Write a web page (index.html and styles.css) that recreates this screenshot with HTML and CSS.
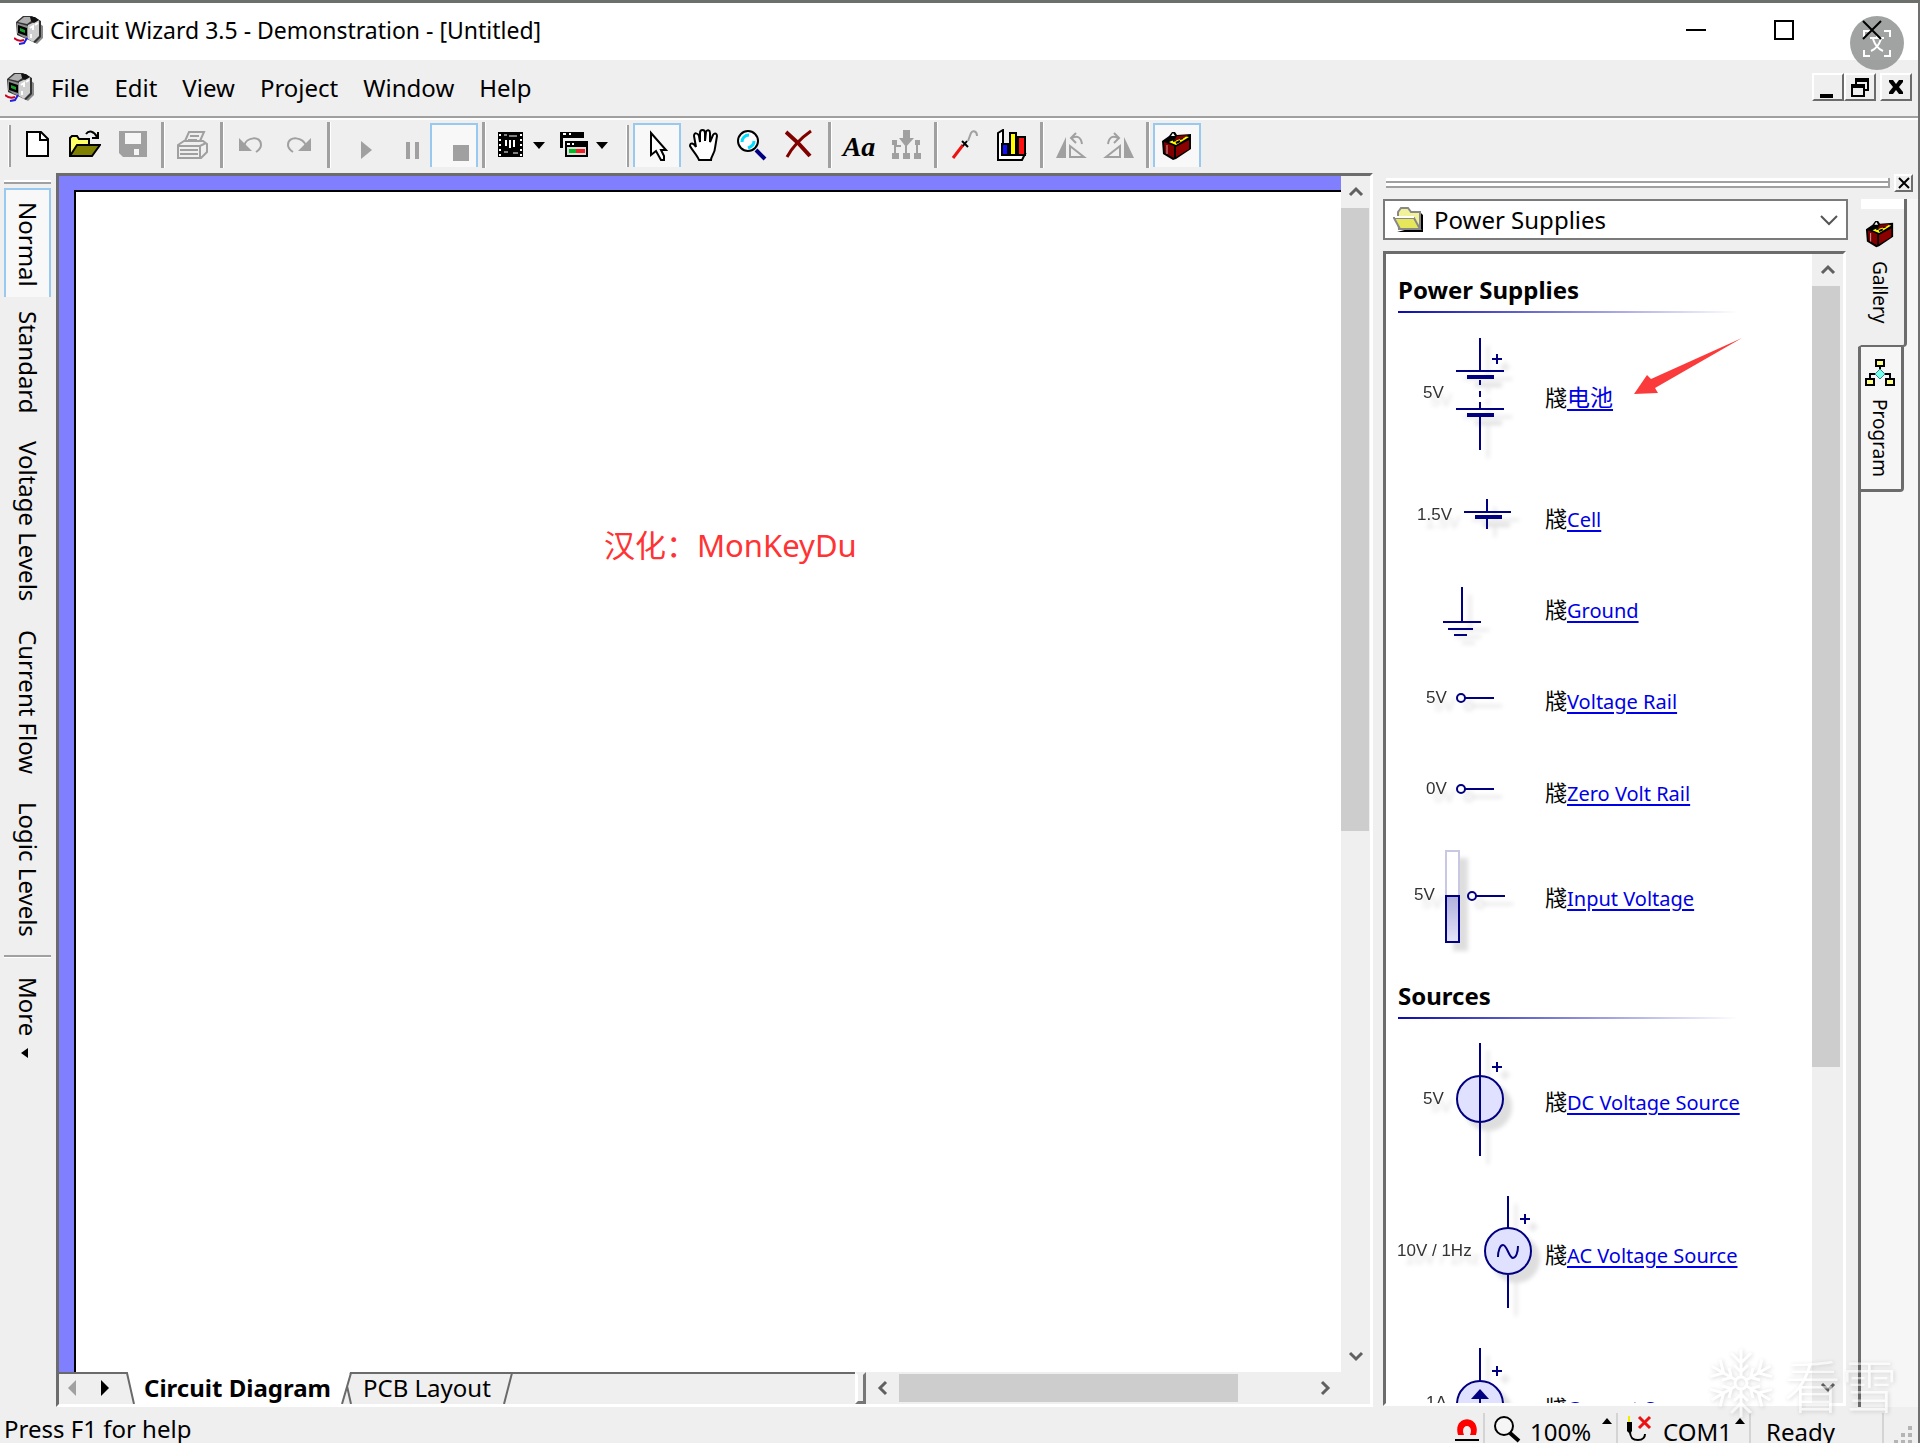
FILE: index.html
```html
<!DOCTYPE html>
<html lang="en">
<head>
<meta charset="utf-8">
<title>Circuit Wizard 3.5 - Demonstration - [Untitled]</title>
<link rel="stylesheet" href="styles.css">
</head>
<body>
<svg class="defs" aria-hidden="true">
  <symbol id="app" viewBox="0 0 30 30">
    <path d="M22 6l7 5v12l-6 6-7-4z" fill="#8a8a8a"/>
    <path d="M2 7L9 1h9l9 5v16l-6 6-6-3-5-2-7-3z" fill="#333"/>
    <path d="M4 7l6-5h7l3 2-7 5z" fill="#b0b0b0"/>
    <path d="M3 8l11 3v13l-5-2-6-4z" fill="#8c8c8c"/>
    <path d="M14 10l11-5v16l-6 6-5-3z" fill="#cfcfcf"/>
    <path d="M16 2h5l4 3-5 3-3-2z" fill="#111"/>
    <path d="M4 10l9 3v8l-9-3z" fill="#000"/>
    <path d="M6 13l5 2v3l-5-2z" fill="#15a02a"/>
    <path d="M16 13l3-2v4M21 10l3-2M17 19v4" stroke="#fff" stroke-width="2" fill="none"/>
    <path d="M0 23c3 3 7 3 10 2" stroke="#d00020" stroke-width="2" fill="none"/>
    <path d="M5 29l5-1 3-5" stroke="#2020e0" stroke-width="2" fill="none"/>
  </symbol>
  <symbol id="toolbox" viewBox="0 0 32 32">
    <path d="M1 11L8 6l3-4h3l2 3 14-1v15l-15 10-3 1-10-6z" fill="#000"/>
    <path d="M3 12l10 4v12L4 23z" fill="#800000"/>
    <path d="M15 17l13-7v9l-13 8z" fill="#8c0000"/>
    <path d="M8 12l15-6 5 1-13 8z" fill="#ff0"/>
    <path d="M12 11l3-1M19 9l3-1M15 13l4-2" stroke="#000" stroke-width="2"/>
    <path d="M16 6l11-1-4 3-10 3z" fill="#800000"/>
    <path d="M10 6l2-3 2 3z" fill="#fff"/>
    <path d="M6 15v9" stroke="#d8a0a0" stroke-width="1"/>
  </symbol>
  <symbol id="plus" viewBox="-6 -6 12 12"><path d="M-5 0H5M0-5V5" stroke="#000080" stroke-width="2"/></symbol>
  <symbol id="x" viewBox="0 0 16 16"><path d="M1 1h4l3 4 3-4h4v2l-4 5 4 5v2h-4l-3-4-3 4H1v-2l4-5-4-5z" fill="#000"/></symbol>
</svg>

<div class="window">
  <header class="titlebar">
    <svg class="app-icon" width="30" height="30"><use href="#app"/></svg>
    <h1>Circuit Wizard 3.5 - Demonstration - [Untitled]</h1>
    <div class="caption">
      <button aria-label="Minimize"><svg width="20" height="20"><path d="M0 10h20" stroke="#000" stroke-width="2"/></svg></button>
      <button aria-label="Maximize"><svg width="20" height="20"><path d="M1 1h18v18H1z" fill="none" stroke="#000" stroke-width="2"/></svg></button>
      <button aria-label="Close"><svg width="20" height="20"><path d="M1 1l18 18M19 1L1 19" stroke="#000" stroke-width="2"/></svg></button>
    </div>
    <button class="translate" aria-label="Translate">
      <svg width="54" height="54" viewBox="0 0 54 54" fill="none" stroke="#fff" stroke-width="2">
        <path d="M14 21v-6h6M34 15h6v6M40 34v6h-6M20 40h-6v-6"/>
        <path d="M20 22h14M27 19v3M23 23c2 6 5 10 10 12M31 23c-2 6-5 10-10 12"/>
      </svg>
    </button>
  </header>

  <nav class="menubar">
    <svg class="app-icon" width="30" height="30"><use href="#app"/></svg>
    <button>File</button><button>Edit</button><button>View</button><button>Project</button><button>Window</button><button>Help</button>
    <div class="mdi">
      <button aria-label="Minimize document"><svg width="28" height="24"><path d="M6 19h13v4H6z"/></svg></button>
      <button aria-label="Restore document"><svg width="28" height="24"><path d="M9 3h14v13h-4v6H5V9h4zM11 7v2h8v5h2V7zM7 13v7h10v-7z" fill-rule="evenodd"/></svg></button>
      <button class="apart" aria-label="Close document"><svg width="28" height="24"><use href="#x" x="6" y="4" width="16" height="16"/></svg></button>
    </div>
  </nav>

  <div class="toolbar" role="toolbar" aria-label="Tools">
    <div class="tools">
      <span class="grip"></span>
      <button aria-label="New"><svg width="32" height="32"><path d="M6 3h14l7 7v17H6z" fill="#fff" stroke="#000" stroke-width="2"/><path d="M19 3v8h8" fill="none" stroke="#000" stroke-width="2"/></svg></button>
      <button aria-label="Open"><svg width="32" height="32"><path d="M1 27V9l2-2h5l2 3h10v6" fill="#ff6" stroke="#000" stroke-width="2"/><path d="M1 27L8 16h23l-8 11z" fill="#808000" stroke="#000" stroke-width="2"/><path d="M17 5c3-4 8-3 11 3M29 3v6h-6" fill="none" stroke="#000" stroke-width="2"/></svg></button>
      <button aria-label="Save" disabled><svg width="32" height="32"><path d="M2 2h28v26H6l-4-4z" fill="#a0a0a0"/><path d="M8 4h16v11H8zM17 20h5v6h-5z" fill="#f6f6f6"/></svg></button>
      <span class="sep"></span>
      <button aria-label="Print" disabled><svg width="32" height="32" fill="none" stroke="#a0a0a0" stroke-width="2"><path d="M9 12L13 3h15l-4 9M14 7h9M12 11h9"/><path d="M2 16l6-4h19l4 3v8l-6 6H2z"/><path d="M2 17h22l6-3M24 17v11M4 21h18M4 25h18"/></svg></button>
      <span class="sep"></span>
      <button aria-label="Undo" disabled><svg width="32" height="32"><path d="M4 9v13h13z" fill="#a0a0a0"/><path d="M9 17c2-9 17-11 17-1 0 3-2 5-5 7" fill="none" stroke="#a0a0a0" stroke-width="2"/></svg></button>
      <button aria-label="Redo" disabled><svg width="32" height="32"><path d="M28 9v13H15z" fill="#a0a0a0"/><path d="M23 17C21 8 5 6 5 16c0 3 2 5 5 7" fill="none" stroke="#a0a0a0" stroke-width="2"/></svg></button>
      <span class="sep"></span>
      <button aria-label="Run" disabled><svg width="32" height="32"><path d="M19 12v18l11-9z" fill="#a0a0a0"/></svg></button>
      <button aria-label="Pause" disabled><svg width="32" height="32"><path d="M16 13h4v17h-4zM25 13h4v17h-4z" fill="#a0a0a0"/></svg></button>
      <button class="pressed" aria-label="Stop"><svg width="32" height="32"><path d="M15 15h16v16H15z" fill="#a0a0a0"/></svg></button>
      <span class="sep"></span>
      <button class="drop" aria-label="Board view"><svg width="63" height="32"><path d="M9 3h25v25H9z"/><path d="M11 5v22M32 5v22" stroke="#fff" stroke-width="2" stroke-dasharray="2 3"/><path d="M15 6h3M20 7h8M15 23h4M24 24h5" stroke="#fff" stroke-width="1"/><path d="M17 11v6M21 11v8M25 11v7" stroke="#fff" stroke-width="2"/><path d="M44 13h12l-6 7z"/></svg></button>
      <button class="drop" aria-label="Windows"><svg width="63" height="32"><path d="M8 3h24v6H8zM8 9h3v10H8z"/><path d="M11 5h3M17 5h2" stroke="#fff" stroke-width="2"/><path d="M13 12h23v16H13z"/><path d="M15 18h19v8H15z" fill="#ddd"/><path d="M17 20h7v4h-7z" fill="#0b2"/><path d="M24 20h9v4h-9z" fill="#e22"/><path d="M15 15h3M20 15h2" stroke="#fff" stroke-width="2"/><path d="M44 13h12l-6 7z"/></svg></button>
    </div>
    <div class="tools tight">
      <span class="grip"></span>
      <button class="pressed" aria-label="Select"><svg width="32" height="32"><path d="M10 3v22l5-4 5 9h3v-4l-3-6h5z" fill="#fff" stroke="#000" stroke-width="2"/></svg></button>
      <button aria-label="Pan"><svg width="32" height="32"><path d="M10 31C8 26 3 21 1 17c0-4 4-3 6 1L5 7c0-4 4-3 5 0l1 6V4c0-4 5-4 5 0v8l1-9c1-3 4-2 4 1v9l3-7c2-3 4-1 4 1l-2 12c0 5-4 8-4 12z" fill="#fff" stroke="#000" stroke-width="2"/></svg></button>
      <button aria-label="Zoom"><svg width="32" height="32"><circle cx="11" cy="12" r="10" fill="#fff" stroke="#000" stroke-width="2"/><path d="M5 13c0-4 3-7 7-7M17 12c0 4-3 6-6 7" stroke="#0df" stroke-width="3" fill="none"/><path d="M19 21l9 9" stroke="#000080" stroke-width="4"/></svg></button>
      <button aria-label="Delete"><svg width="32" height="32" fill="none" stroke="#800000"><path d="M1 3c6 5 14 12 24 24" stroke-width="4"/><path d="M26 2C16 9 8 17 2 28" stroke-width="3"/></svg></button>
      <span class="sep"></span>
      <button class="text-tool" aria-label="Text">Aa</button>
      <button aria-label="Flowchart" disabled><svg width="32" height="32" fill="#a0a0a0"><path d="M12 1h7v8h4l-8 9-7-9h4z"/><path d="M15 17v8M4 25v-8h6M26 25V13" fill="none" stroke="#a0a0a0" stroke-width="2"/><path d="M1 24h7v6H1zM12 24h7v6h-7zM23 24h7v6h-7zM1 11h5v5H1zM24 11h5v5h-5z"/></svg></button>
      <span class="sep"></span>
      <button aria-label="Probe"><svg width="32" height="32" fill="none"><path d="M4 29l10-13" stroke="#e11" stroke-width="3"/><path d="M14 17l4-5M13 12l6 6" stroke="#000" stroke-width="2"/><path d="M19 12l3-8c2-3 6-2 6 3" stroke="#a0a0a0" stroke-width="2"/></svg></button>
      <button aria-label="Graph"><svg width="32" height="32"><path d="M1 4l5-3v24h22l-3 6H1z" fill="#fff" stroke="#000" stroke-width="2"/><path d="M5 15h6v11H5z" fill="#11f" stroke="#000" stroke-width="2"/><path d="M13 4h6v22h-6z" fill="#ff0" stroke="#000" stroke-width="2"/><path d="M21 8h7v18h-7z" fill="#f11" stroke="#000" stroke-width="2"/></svg></button>
      <span class="sep"></span>
      <button aria-label="Rotate left" disabled><svg width="32" height="32"><path d="M1 29L11 8v21z" fill="#a0a0a0"/><path d="M15 28V17l14 11z" fill="none" stroke="#a0a0a0" stroke-width="2"/><path d="M17 9c5-3 9-1 10 6M21 4l-5 5 5 5" fill="none" stroke="#a0a0a0" stroke-width="2"/></svg></button>
      <button aria-label="Rotate right" disabled><svg width="32" height="32"><path d="M31 29L21 8v21z" fill="#a0a0a0"/><path d="M17 28V17L3 28z" fill="none" stroke="#a0a0a0" stroke-width="2"/><path d="M15 9C10 6 6 8 5 15M11 4l5 5-5 5" fill="none" stroke="#a0a0a0" stroke-width="2"/></svg></button>
      <span class="sep"></span>
      <button class="pressed" aria-label="Gallery"><svg width="32" height="32"><use href="#toolbox"/></svg></button>
    </div>
  </div>

  <main class="workspace">
    <aside class="styles-bar">
      <span class="grip-h"></span>
      <button class="pressed">Normal</button>
      <button>Standard</button>
      <button>Voltage Levels</button>
      <button>Current Flow</button>
      <button>Logic Levels</button>
      <span class="rule"></span>
      <button class="more">More<svg width="8" height="10"><path d="M8 0v10L1 5z"/></svg></button>
    </aside>

    <section class="document">
      <div class="canvas-row">
        <div class="canvas"><div class="sheet"><p>汉化：MonKeyDu</p></div></div>
        <div class="vscroll">
          <button aria-label="Scroll up"><svg width="16" height="12"><path d="M2 9l6-6 6 6" /></svg></button>
          <div class="track"><div class="thumb"></div></div>
          <button aria-label="Scroll down"><svg width="16" height="12"><path d="M2 3l6 6 6-6" /></svg></button>
        </div>
      </div>
      <div class="tab-row">
        <div class="sheet-tabs">
          <button class="arrow" aria-label="Previous sheet"><svg width="10" height="16"><path d="M9 0v16L1 8z" fill="#a0a0a0"/></svg></button>
          <button class="arrow next" aria-label="Next sheet"><svg width="10" height="16"><path d="M1 0v16l8-8z"/></svg></button>
          <svg class="slant" width="20" height="32"><path d="M7 0h13v32h-6z" fill="#fff"/><path d="M0 1h7l7 31" fill="none" stroke="#6a6a6a" stroke-width="2"/></svg>
          <button class="tab current">Circuit Diagram</button>
          <svg class="slant" width="24" height="32"><path d="M0 0h15L7 32H0z" fill="#fff"/><path d="M24 1h-8L7 32M12 14l4 18" fill="none" stroke="#6a6a6a" stroke-width="2"/></svg>
          <button class="tab">PCB Layout</button>
          <svg class="slant" width="24" height="32"><path d="M0 1h24M17 1L9 32" fill="none" stroke="#6a6a6a" stroke-width="2"/></svg>
        </div>
        <div class="splitter"></div>
        <div class="hscroll">
          <button aria-label="Scroll left"><svg width="12" height="16"><path d="M9 2L3 8l6 6"/></svg></button>
          <div class="track"><div class="thumb"></div></div>
          <button aria-label="Scroll right"><svg width="12" height="16"><path d="M3 2l6 6-6 6"/></svg></button>
        </div>
      </div>
    </section>

    <aside class="dock">
      <div class="dock-head"><span class="bars"></span><button aria-label="Close gallery"><svg width="14" height="14"><path d="M2 2l10 10M12 2L2 12" stroke="#000" stroke-width="2"/></svg></button></div>
      <div class="dock-body">
        <div class="gallery">
          <div class="combo">
            <svg width="32" height="26"><path d="M4 25h26V8l-3-3v14z"/><path d="M5 9V5l3-4h7l3 4h9v17H6z" fill="#f2f29a" stroke="#888" stroke-width="2"/><path d="M1 11h20l6 11H7z" fill="#e6e65a" stroke="#888" stroke-width="2"/><path d="M2 10h19" stroke="#fff" stroke-width="2"/></svg>
            <select aria-label="Gallery category"><option>Power Supplies</option></select>
            <svg class="chev" width="18" height="12"><path d="M1 2l8 8 8-8" fill="none" stroke="#555" stroke-width="2"/></svg>
          </div>
          <div class="list">
            <div class="items">
              <section>
                <h2>Power Supplies</h2>
                <div class="item"><svg width="159" height="153"><text x="37" y="78">5V</text><g class="wire"><path d="M94 18v33M70 51h48M94 60v5M94 71v6M94 82v7M70 89h48M94 97v33"/><path d="M81 57h27M81 95h27" stroke-width="4"/></g><use href="#plus" x="105" y="33" width="12" height="12"/></svg><span>牋<a class="cjk" href="#battery">电池</a></span></div>
                <div class="item"><svg width="159" height="91"><text x="31" y="47">1.5V</text><g class="wire"><path d="M101 26v13M78 39h47M101 44v12"/><path d="M89 44h27" stroke-width="4"/></g></svg><span>牋<a href="#cell">Cell</a></span></div>
                <div class="item"><svg width="159" height="91"><path class="wire" d="M76 23v35M57 58h38M62 65h25M68 71h13"/></svg><span>牋<a href="#ground">Ground</a></span></div>
                <div class="item"><svg width="159" height="92"><text x="40" y="48">5V</text><g class="wire"><circle cx="75" cy="43" r="4"/><path d="M79 43h29"/></g></svg><span>牋<a href="#voltage-rail">Voltage Rail</a></span></div>
                <div class="item"><svg width="159" height="92"><text x="40" y="47">0V</text><g class="wire"><circle cx="75" cy="42" r="4"/><path d="M79 42h29"/></g></svg><span>牋<a href="#zero-rail">Zero Volt Rail</a></span></div>
                <div class="item"><svg width="159" height="118"><defs><linearGradient id="level" x1="0" y1="0" x2="0" y2="1"><stop offset="0" stop-color="#b0b0dc"/><stop offset="1" stop-color="#e4e4fa"/></linearGradient></defs><text x="28" y="61">5V</text><path d="M60 12h13v45H60z" fill="#fff" stroke="#c8c8e4" stroke-width="2"/><path d="M60 57h13v46H60z" fill="url(#level)" stroke="#000080" stroke-width="2"/><g class="wire"><circle cx="86" cy="57" r="4"/><path d="M90 57h29"/></g></svg><span>牋<a href="#input">Input Voltage</a></span></div>
              </section>
              <section>
                <h2>Sources</h2>
                <div class="item"><svg width="159" height="152"><text x="37" y="78">5V</text><g class="wire"><circle class="body" cx="94" cy="73" r="23"/><path d="M94 17v113"/></g><use href="#plus" x="105" y="35" width="12" height="12"/></svg><span>牋<a href="#dc">DC Voltage Source</a></span></div>
                <div class="item"><svg width="159" height="153"><text x="11" y="78">10V / 1Hz</text><g class="wire"><circle class="body" cx="122" cy="73" r="23"/><path d="M122 18v32M122 97v33M112 79c0-6 2-12 5-12 4 0 6 13 10 13 3 0 5-6 5-12"/></g><use href="#plus" x="133" y="35" width="12" height="12"/></svg><span>牋<a href="#ac">AC Voltage Source</a></span></div>
                <div class="item"><svg width="159" height="153"><text x="40" y="77">1A</text><g class="wire"><circle class="body" cx="94" cy="73" r="23"/><path d="M94 17v33M94 66v20M94 97v33"/></g><path d="M94 58l9 10H85z" fill="#000080"/><use href="#plus" x="105" y="34" width="12" height="12"/></svg><span>牋<a href="#current">Current Source</a></span></div>
              </section>
            </div>
            <svg class="pointer" width="110" height="60" aria-hidden="true"><path d="M1 57L14 38l4 4L109 1 22 51l3 5z" fill="#fb3b3b"/></svg>
            <div class="vscroll slim">
              <button aria-label="Scroll up"><svg width="16" height="12"><path d="M2 9l6-6 6 6"/></svg></button>
              <div class="track"><div class="thumb"></div></div>
              <button aria-label="Scroll down"><svg width="16" height="12"><path d="M2 3l6 6 6-6"/></svg></button>
            </div>
          </div>
        </div>
        <div class="side-tabs">
          <button class="side-tab active"><svg width="30" height="30"><use href="#toolbox"/></svg>Gallery</button>
          <button class="side-tab"><svg width="30" height="28" fill="#ff8" stroke="#000" stroke-width="2"><path d="M15 8v3M10 15H5v6M20 15h5v6" fill="none"/><path d="M11 1h8v6h-8zM1 20h8v6H1zM21 20h8v6h-8z"/><path d="M15 10l5 5-5 5-5-5z" fill="#7fe" stroke="#388" stroke-width="1"/></svg>Program</button>
        </div>
      </div>
    </aside>
  </main>

  <footer class="statusbar">
    <span class="hint">Press F1 for help</span>
    <button class="magnet" aria-label="Snap"><svg width="26" height="26"><path d="M4 18C-2-3 28-3 22 18h-6c5-12-11-12-6 0z" fill="#f00"/><path d="M1 23h24" stroke="#000" stroke-width="2"/></svg></button>
    <button class="zoom"><svg width="28" height="28"><circle cx="11" cy="11" r="9" fill="#f6f6f6" stroke="#000" stroke-width="2"/><path d="M17 18l9 8" stroke="#000" stroke-width="4"/></svg><span>100%</span><svg class="up" width="10" height="6"><path d="M0 6l5-6 5 6z"/></svg></button>
    <button class="port"><svg width="28" height="28"><path d="M3 1v6" stroke="#ee0" stroke-width="2"/><path d="M1 7h5v9l-2 3-3-3z"/><path d="M4 16c0 8 4 9 8 9 5 0 7-3 7-6" fill="none" stroke="#000" stroke-width="2"/><path d="M13 2l11 11M24 2L13 13" stroke="#e11" stroke-width="3"/></svg><span>COM1</span><svg class="up" width="10" height="6"><path d="M0 6l5-6 5 6z"/></svg></button>
    <span class="state">Ready</span>
    <svg class="sizer" width="24" height="24" fill="#b4b4b4"><path d="M15 1h4v4h-4zM8 8h4v4H8zM15 8h4v4h-4zM1 15h4v4H1zM8 15h4v4H8zM15 15h4v4h-4z"/></svg>
  </footer>
</div>

<div class="watermark" aria-hidden="true">
  <svg width="70" height="70" viewBox="-35 -35 70 70" fill="none" stroke="#fff" stroke-width="3">
    <path id="arm" d="M0-7V-34M-10-30L0-20 10-30M-7-18L0-11 7-18"/>
    <use href="#arm" transform="rotate(60)"/><use href="#arm" transform="rotate(120)"/><use href="#arm" transform="rotate(180)"/><use href="#arm" transform="rotate(240)"/><use href="#arm" transform="rotate(300)"/>
    <circle r="6"/>
  </svg>
  <span>看雪</span>
</div>
</body>
</html>
```
FILE: styles.css
```css
* { box-sizing: border-box; }
body { margin: 0; font-family: "Noto Sans", "Noto Sans CJK SC", sans-serif; font-size: 24px; color: #000; }
button { border: 0; padding: 0; margin: 0; background: none; font: inherit; color: inherit; }
svg { display: block; flex: none; }
.defs { position: absolute; width: 0; height: 0; }

.window { display: flex; flex-direction: column; height: 100vh; overflow: hidden; background: #efefef; border-top: 3px solid #6c706c; border-right: 2px solid #707070; }

.titlebar { display: flex; align-items: center; height: 57px; padding: 0 0 4px 14px; background: #fff; position: relative; flex: none; }
.titlebar h1 { margin: 0 0 0 6px; font-size: 23px; font-weight: 400; line-height: 30px; }
.caption { display: flex; gap: 68px; margin-left: auto; padding-right: 36px; position: relative; z-index: 1; }
.translate { position: absolute; top: 13px; right: 14px; border-radius: 50%; background: rgba(135, 137, 137, .78); }

.menubar { display: flex; align-items: center; gap: 25px; height: 56px; padding: 0 0 2px 5px; flex: none; }
.menubar .app-icon { margin-right: -9px; }
.mdi { display: flex; margin-left: auto; padding-right: 6px; }
.mdi button { width: 32px; height: 28px; border: 2px solid; border-color: #fff #6c6c6c #6c6c6c #fff; }
.mdi .apart { margin-left: 4px; }

.toolbar { display: flex; height: 57px; padding: 4px 0 0 8px; border-top: 2px solid #a0a0a0; box-shadow: inset 0 2px #fff; flex: none; }
.tools { display: flex; }
.tools > button { display: flex; align-items: center; justify-content: center; width: 48px; height: 46px; }
.tools > .drop { width: 63px; }
.tools > .pressed { height: 44px; margin-top: 1px; }
.pressed { background: #f8f8f8; border: 2px solid #99c9ef; border-bottom: 0; }
.grip { width: 3px; height: 42px; margin: 3px 2px 0 0; border-right: 2px solid #a0a0a0; border-left: 1px solid #fff; }
.tight .grip { margin: 3px 4px 0 11px; }
.sep { width: 11px; display: flex; justify-content: center; }
.tight .sep { width: 10px; }
.sep::before { content: ""; width: 3px; height: 46px; background: #a0a0a0; border-right: 1px solid #fff; }
.tools > .text-tool { font: italic bold 28px "Liberation Serif", serif; padding-top: 4px; }

.workspace { display: flex; flex: 1; min-height: 0; }
.styles-bar { width: 56px; padding: 7px 5px 0 4px; display: flex; flex-direction: column; flex: none; }
.styles-bar button { writing-mode: vertical-rl; display: flex; align-items: center; justify-content: center; width: 47px; padding: 14px 0; line-height: 30px; }
.styles-bar .pressed { padding: 12px 0 10px; }
.grip-h { height: 4px; margin-bottom: 4px; border-bottom: 2px solid #a0a0a0; border-top: 2px solid #fff; }
.rule { height: 3px; margin: 4px 0 5px; background: #a0a0a0; border-bottom: 1px solid #fff; }
.styles-bar .more { gap: 12px; }
.more svg { margin-right: 8px; }

.document { flex: 1; min-width: 0; display: flex; flex-direction: column; border: 3px solid; border-color: #6c6c6c #fff #fff #6c6c6c; }
.canvas-row { flex: 1; display: flex; min-height: 0; }
.canvas { flex: 1; background: #8080ff; padding: 14px 0 0 15px; display: flex; }
.sheet { flex: 1; background: #fff; border: 2px solid #000; border-width: 2px 0 0 2px; }
.sheet p { margin: 332px 0 0 528px; color: #f33; font-size: 31px; line-height: 42px; }
.vscroll { width: 29px; display: flex; flex-direction: column; background: #efefef; }
.vscroll button, .hscroll button { display: flex; align-items: center; justify-content: center; flex: none; }
.vscroll button { height: 32px; }
.vscroll path, .hscroll path { fill: none; stroke: #606060; stroke-width: 3; }
.track { flex: 1; display: flex; }
.thumb { background: #cdcdcd; }
.vscroll .thumb { width: 28px; height: 55%; }

.tab-row { height: 32px; display: flex; flex: none; }
.sheet-tabs { flex: 1; display: flex; background: linear-gradient(#6a6a6a, #6a6a6a) 0 0 / 100% 2px no-repeat; }
.arrow { width: 33px; padding-left: 8px; }
.arrow.next { width: 28px; }
.slant { flex: none; }
.tab { line-height: 28px; padding: 0 4px 2px; border-top: 2px solid #6a6a6a; white-space: nowrap; }
.tab.current { background: #fff; border-color: #fff; font-weight: 700; }
.splitter { width: 11px; border: 3px solid; border-color: #efefef #777 #777 #fff; }
.hscroll { width: 504px; padding: 2px 29px 2px 0; display: flex; }
.hscroll button { width: 33px; }
.hscroll .thumb { width: 83%; }

.dock { width: 545px; display: flex; flex-direction: column; flex: none; padding-left: 10px; }
.dock-head { display: flex; align-items: center; height: 26px; gap: 4px; padding: 0 5px 6px 3px; flex: none; }
.bars { flex: 1; height: 10px; border-bottom: 2px solid #a0a0a0; border-right: 2px solid #a0a0a0; background: linear-gradient(#fff 3px, #a0a0a0 3px 5px, #fff 5px); }
.dock-head button { width: 19px; height: 18px; border: 2px solid; border-color: #fff #6c6c6c #6c6c6c #fff; display: flex; align-items: center; justify-content: center; }
.dock-body { flex: 1; display: flex; min-height: 0; }
.gallery { flex: 1; display: flex; flex-direction: column; gap: 11px; min-width: 0; }
.combo { height: 41px; display: flex; align-items: center; background: #fff; border: 2px solid #7a7a7a; padding: 0 8px; flex: none; }
.combo select { flex: 1; appearance: none; border: 0; background: none; font: inherit; line-height: 34px; color: #000; padding: 0 0 0 9px; }
.list { flex: 1; min-height: 0; display: flex; background: #fff; border: 3px solid; border-color: #6c6c6c #fff #fff #6c6c6c; margin: 0 2px 1px 0; position: relative; }
.items { flex: 1; overflow: hidden; min-width: 0; }
.items section + section { margin-top: 3px; }
.items h2 { margin: 0; height: 66px; padding: 21px 0 0 12px; font-size: 24px; font-weight: 700; line-height: 30px; background: linear-gradient(90deg, #0a0ab0, #fff) 12px 57px / 340px 2px no-repeat; }
.item { display: flex; align-items: center; font-size: 22px; line-height: 28px; }
.item span { white-space: nowrap; }
.item a { color: #0000e6; font-size: 20px; text-underline-offset: 3px; text-decoration-thickness: 2px; }
.item .cjk { font-size: 23px; }
.item svg { filter: drop-shadow(8px 8px 2px rgba(0, 0, 0, .13)); overflow: visible; }
.item text { font: 17px "Liberation Sans", sans-serif; fill: #333; }
.wire { fill: none; stroke: #000080; stroke-width: 2; }
.body { fill: #e0e0ff; }
.pointer { position: absolute; left: 247px; top: 83px; }
.slim { width: 31px; }
.slim .thumb { height: 72%; }

.side-tabs { width: 70px; padding-left: 10px; display: flex; flex-direction: column; align-items: flex-start; background: linear-gradient(90deg, #efefef 10px, #6c6c6c 10px 13px, #f6f6f6 13px); }
.side-tab { writing-mode: vertical-rl; display: flex; align-items: center; gap: 12px; width: 46px; line-height: 26px; font-size: 19px; background: #f6f6f6; border: 3px solid #6c6c6c; border-top-width: 0; border-radius: 0 0 4px 0; padding: 12px 3px 15px 0; height: 145px; }
.side-tab.active { background: #efefef; width: 49px; height: 148px; border-left: 3px solid #efefef; box-shadow: inset 0 10px #fff; padding: 20px 6px 15px 0; border-bottom-width: 2px; }

.statusbar { display: flex; align-items: flex-start; height: 36px; flex: none; padding-top: 6px; }
.hint { line-height: 32px; margin-left: 4px; margin-right: auto; }
.statusbar button, .state { display: flex; align-items: flex-start; height: 30px; border-right: 2px solid #d4d4d4; line-height: 38px; }
.magnet { padding: 4px 3px 0 0; }
.zoom, .port { width: 133px; padding-left: 8px; }
.zoom svg, .port svg { margin-top: 2px; }
.zoom span, .port span { margin-left: 9px; }
.statusbar .up { margin: 5px 4px 0 auto; }
.state { width: 133px; padding-left: 15px; }
.sizer { margin: 12px 1px 0 9px; }

.watermark { position: fixed; right: 22px; bottom: 18px; display: flex; align-items: center; gap: 8px; pointer-events: none; opacity: .5; filter: drop-shadow(1px 1px 2px rgba(0, 0, 0, .3)); }
.watermark span { color: #fff; font: 300 57px/84px "Noto Sans CJK SC", sans-serif; }
```
